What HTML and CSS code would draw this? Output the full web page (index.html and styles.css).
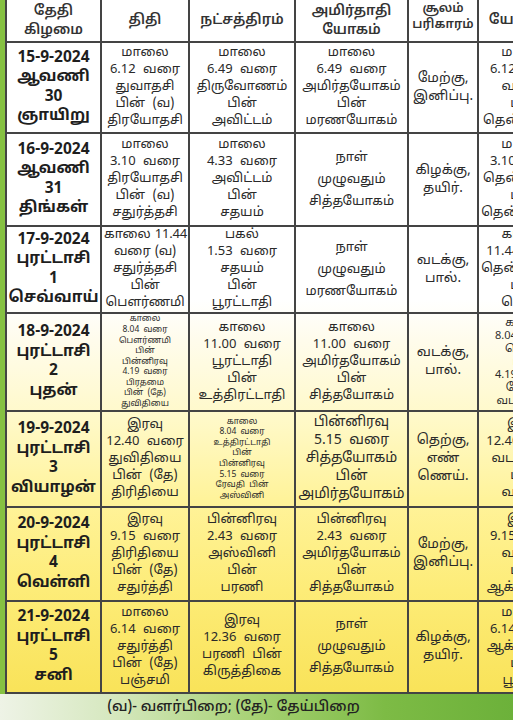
FILE: index.html
```html
<!DOCTYPE html>
<html lang="ta">
<head>
<meta charset="utf-8">
<title>பஞ்சாங்கம்</title>
<link rel="stylesheet" href="styles.css">
</head>
<body>
<div class="page">
  <div class="sheet">
    <table class="cal">
      <colgroup>
        <col class="c1"><col class="c2"><col class="c3"><col class="c4"><col class="c5"><col class="c6">
      </colgroup>
      <thead>
        <tr class="hd">
          <th>தேதி<br>கிழமை</th>
          <th>திதி</th>
          <th>நட்சத்திரம்</th>
          <th>அமிர்தாதி<br>யோகம்</th>
          <th class="up">சூலம்<br>பரிகாரம்</th>
          <th>யோகினி</th>
        </tr>
      </thead>
      <tbody>
        <tr class="r1">
          <td class="date">15-9-2024<br>ஆவணி<br>30<br>ஞாயிறு</td>
          <td>மாலை<br>6.12 வரை<br>துவாதசி<br>பின் (வ)<br>திரயோதசி</td>
          <td>மாலை<br>6.49 வரை<br>திருவோணம்<br>பின்<br>அவிட்டம்</td>
          <td>மாலை<br>6.49 வரை<br>அமிர்தயோகம்<br>பின்<br>மரணயோகம்</td>
          <td class="sul">மேற்கு,<br>இனிப்பு.</td>
          <td>மாலை<br>6.12 வரை<br>வடக்கு<br>பின்<br>தென்மேற்கு</td>
        </tr>
        <tr class="r2">
          <td class="date">16-9-2024<br>ஆவணி<br>31<br>திங்கள்</td>
          <td>மாலை<br>3.10 வரை<br>திரயோதசி<br>பின் (வ)<br>சதுர்த்தசி</td>
          <td>மாலை<br>4.33 வரை<br>அவிட்டம்<br>பின்<br>சதயம்</td>
          <td class="wide">நாள்<br>முழுவதும்<br>சித்தயோகம்</td>
          <td class="sul">கிழக்கு,<br>தயிர்.</td>
          <td>மாலை<br>3.10 வரை<br>தென்மேற்கு<br>பின்<br>தென்கிழக்கு</td>
        </tr>
        <tr class="r3">
          <td class="date">17-9-2024<br>புரட்டாசி<br>1<br>செவ்வாய்</td>
          <td class="tight">காலை 11.44<br>வரை (வ)<br>சதுர்த்தசி<br>பின்<br>பௌர்ணமி</td>
          <td>பகல்<br>1.53 வரை<br>சதயம்<br>பின்<br>பூரட்டாதி</td>
          <td class="wide">நாள்<br>முழுவதும்<br>மரணயோகம்</td>
          <td class="sul">வடக்கு,<br>பால்.</td>
          <td>காலை<br>11.44 வரை<br>தென்கிழக்கு<br>பின்<br>தெற்கு</td>
        </tr>
        <tr class="r4">
          <td class="date">18-9-2024<br>புரட்டாசி<br>2<br>புதன்</td>
          <td class="sm">காலை<br>8.04 வரை<br>பௌர்ணமி<br>பின்<br>பின்னிரவு<br>4.19 வரை<br>பிரதமை<br>பின் (தே)<br>துவிதியை</td>
          <td>காலை<br>11.00 வரை<br>பூரட்டாதி<br>பின்<br>உத்திரட்டாதி</td>
          <td>காலை<br>11.00 வரை<br>அமிர்தயோகம்<br>பின்<br>சித்தயோகம்</td>
          <td class="sul">வடக்கு,<br>பால்.</td>
          <td class="sm6">காலை<br>8.04 வரை<br>தெற்கு<br>பின்<br>4.19 வரை<br>மேற்கு<br>வடமேற்கு</td>
        </tr>
        <tr class="r5">
          <td class="date">19-9-2024<br>புரட்டாசி<br>3<br>வியாழன்</td>
          <td>இரவு<br>12.40 வரை<br>துவிதியை<br>பின் (தே)<br>திரிதியை</td>
          <td class="sm">காலை<br>8.04 வரை<br>உத்திரட்டாதி<br>பின்<br>பின்னிரவு<br>5.15 வரை<br>ரேவதி பின்<br>அஸ்வினி</td>
          <td class="big">பின்னிரவு<br>5.15 வரை<br>சித்தயோகம்<br>பின்<br>அமிர்தயோகம்</td>
          <td class="sul">தெற்கு,<br>எண்<br>ணெய்.</td>
          <td>இரவு<br>12.40 வரை<br>வடமேற்கு<br>பின்<br>வடக்கு</td>
        </tr>
        <tr class="r6">
          <td class="date">20-9-2024<br>புரட்டாசி<br>4<br>வெள்ளி</td>
          <td>இரவு<br>9.15 வரை<br>திரிதியை<br>பின் (தே)<br>சதுர்த்தி</td>
          <td>பின்னிரவு<br>2.43 வரை<br>அஸ்வினி<br>பின்<br>பரணி</td>
          <td>பின்னிரவு<br>2.43 வரை<br>அமிர்தயோகம்<br>பின்<br>சித்தயோகம்</td>
          <td class="sul">மேற்கு,<br>இனிப்பு.</td>
          <td>இரவு<br>9.15 வரை<br>வடக்கு<br>பின்<br>ஆக்னேயம்</td>
        </tr>
        <tr class="r7">
          <td class="date">21-9-2024<br>புரட்டாசி<br>5<br>சனி</td>
          <td>மாலை<br>6.14 வரை<br>சதுர்த்தி<br>பின் (தே)<br>பஞ்சமி</td>
          <td>இரவு<br>12.36 வரை<br>பரணி பின்<br>கிருத்திகை</td>
          <td class="wide">நாள்<br>முழுவதும்<br>சித்தயோகம்</td>
          <td class="sul">கிழக்கு,<br>தயிர்.</td>
          <td>மாலை<br>6.14 வரை<br>ஆக்னேயம்<br>பின்<br>பூர்வம்</td>
        </tr>
      </tbody>
    </table>
  </div>
  <div class="legend">(வ)- வளர்பிறை; (தே)- தேய்பிறை</div>
</div>
</body>
</html>
```
FILE: styles.css
```css
html, body {
  margin: 0;
  padding: 0;
}
body {
  width: 513px;
  height: 720px;
  overflow: hidden;
  background: #ffffff;
  font-family: "Noto Sans Tamil", "Lohit Tamil", "Noto Sans", "DejaVu Sans", sans-serif;
  color: #2a2a2a;
}
.page {
  width: 513px;
  height: 720px;
  overflow: hidden;
  display: flex;
  flex-direction: column;
}
.sheet {
  border-left: 5px solid #86c142;
  overflow: hidden;
  flex: none;
}
.cal {
  table-layout: fixed;
  width: 566px;
  border-collapse: collapse;
  background: linear-gradient(to bottom,
    #ffffff 0px, #ffffff 300px, #fffcec 340px, #fff9c8 420px,
    #fff39a 500px, #fdec78 590px, #f9e35a 689px);
}
.c1 { width: 95px; }
.c2 { width: 88px; }
.c3 { width: 106px; }
.c4 { width: 113px; }
.c5 { width: 70px; }
.c6 { width: 94px; }
.cal th, .cal td {
  border: 2px solid #444444;
  text-align: center;
  vertical-align: middle;
  padding: 0 2px;
  overflow: hidden;
  white-space: nowrap;
}
.cal th {
  border-top: none;
  font-weight: 600;
  font-size: 14px;
  line-height: 19px;
  color: #333;
}
.cal th.up {
  vertical-align: top;
  font-size: 12.5px;
  line-height: 16px;
  padding: 1px 0 0;
}
.cal td {
  font-size: 13px;
  line-height: 17px;
  word-spacing: 4px;
}
.cal td.tight { word-spacing: 1px; letter-spacing: -0.2px; }
.cal td.date {
  font-weight: 700;
  font-size: 15.5px;
  line-height: 19.5px;
  word-spacing: 0;
  color: #1e1e1e;
  padding: 0;
}
.cal td.sul { font-size: 13.5px; line-height: 18px; }
.cal td.wide { line-height: 22px; }
.cal td.sm {
  font-size: 8.5px;
  line-height: 10.6px;
  word-spacing: 2px;
}
.cal td.sm6 {
  font-size: 11px;
  line-height: 13px;
}
.cal td.big { font-size: 14px; line-height: 18px; }
.hd { height: 42px; }
.r1 { height: 91px; }
.r2 { height: 93px; }
.r3 { height: 83px; }
.r4 { height: 98px; }
.r5 { height: 96px; }
.r6 { height: 94px; }
.r7 { height: 92px; }
.legend {
  flex: 1;
  display: flex;
  align-items: center;
  justify-content: center;
  padding-right: 46px;
  font-size: 14.5px;
  font-weight: 500;
  color: #222;
  background: linear-gradient(to right, #eef3e6 0%, #d6e8bf 22%, #a6d173 50%, #7dbb45 75%, #6cb13a 100%);
}
```
